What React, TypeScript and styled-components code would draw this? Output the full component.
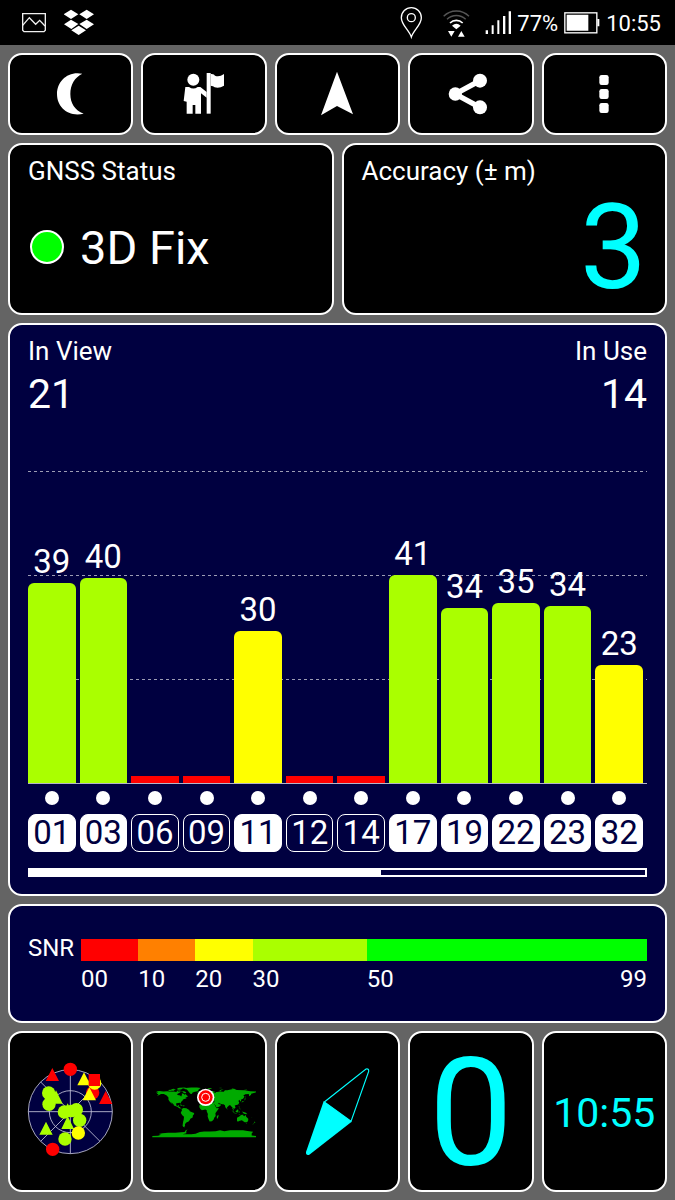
import React from "react";
import styled, { createGlobalStyle } from "styled-components";

const color = {
  frame: "#646464",
  line: "#ffffff",
  black: "#000000",
  navy: "#000040",
  cyan: "#00ffff",
  red: "#ff0000",
  orange: "#ff8000",
  yellow: "#ffff00",
  lime: "#aaff00",
  green: "#00ff00",
  land: "#00aa00",
};

const GlobalStyle = createGlobalStyle`
  *, *::before, *::after { box-sizing: border-box; }
  body {
    margin: 0;
    background: ${color.frame};
    color: ${color.line};
    font-family: Roboto, "Liberation Sans", sans-serif;
  }
`;

const Screen = styled.div`
  min-height: 100vh;
  display: flex;
  flex-direction: column;
`;

const StatusBar = styled.header`
  height: 45px;
  padding: 0 14px 0 22px;
  background: ${color.black};
  display: flex;
  justify-content: space-between;
`;

const StatusGroup = styled.div<{ $gap: number }>`
  display: flex;
  align-items: center;
  gap: ${(p) => p.$gap}px;
`;

const StatusText = styled.span`
  padding-top: 2px;
  font-size: 22px;
  line-height: 26px;
`;

const StatusIcon = styled.svg`
  display: block;
  height: 45px;
`;

const Main = styled.main`
  flex: 1;
  display: flex;
  flex-direction: column;
  gap: 8px;
  padding: 8px;
`;

const Row = styled.div<{ $columns: number }>`
  display: grid;
  grid-template-columns: repeat(${(p) => p.$columns}, minmax(0, 1fr));
  gap: 8px;
`;

const Tile = styled.button<{ $height: number }>`
  height: ${(p) => p.$height}px;
  padding: 0;
  border: 2px solid ${color.line};
  border-radius: 14px;
  background: ${color.black};
  color: ${color.cyan};
  font-family: inherit;
  display: flex;
  align-items: center;
  justify-content: center;
`;

const ToolIcon = styled.svg`
  width: 48px;
  height: 48px;
  fill: ${color.line};
`;

const TileDrawing = styled.svg`
  width: 121px;
  height: 157px;
  flex: none;
`;

const TileValue = styled.span<{ $size: number }>`
  padding-top: 4px;
  font-size: ${(p) => p.$size}px;
  line-height: 1;
`;

const Card = styled.section<{ $navy?: boolean }>`
  border: 2px solid ${color.line};
  border-radius: 14px;
  background: ${(p) => (p.$navy ? color.navy : color.black)};
  padding: 10px 18px 6px;
`;

const Title = styled.h2`
  margin: 0;
  font-size: 26px;
  font-weight: 400;
  line-height: 32px;
`;

const FixRow = styled.div`
  height: 120px;
  display: flex;
  align-items: center;
  gap: 16px;
  padding-left: 2px;
  font-size: 47px;
`;

const FixLamp = styled.span`
  width: 34px;
  height: 34px;
  border: 2px solid ${color.line};
  border-radius: 50%;
  background: ${color.green};
`;

const Accuracy = styled.div`
  height: 120px;
  color: ${color.cyan};
  font-size: 119px;
  line-height: 122px;
  text-align: right;
`;

const ChartCard = styled(Card)`
  flex: 1;
  padding-bottom: 17px;
  display: flex;
  flex-direction: column;
`;

const Counts = styled.div`
  display: flex;
  justify-content: space-between;
  margin-bottom: 50px;
`;

const Count = styled.div<{ $right?: boolean }>`
  text-align: ${(p) => (p.$right ? "right" : "left")};
`;

const CountValue = styled.div`
  font-size: 41px;
  line-height: 54px;
`;

const Plot = styled.div`
  display: grid;
  height: 313px;
  margin-top: auto;
  border-bottom: 1px solid #b4b4c8;
  > * {
    grid-area: 1 / 1;
  }
`;

const GridLines = styled.div`
  display: flex;
  flex-direction: column;
`;

const GridBand = styled.div`
  flex: 1;
  background: repeating-linear-gradient(90deg, #9c9cb4 0 3px, transparent 3px 6px) top left / 100% 1px no-repeat;
`;

const Columns = styled.div`
  display: grid;
  grid-template-columns: repeat(12, minmax(0, 1fr));
  column-gap: 4px;
  padding-right: 4px;
`;

const BarColumn = styled.div`
  height: 312px;
  display: flex;
  flex-direction: column;
  justify-content: flex-end;
  align-items: stretch;
`;

const BarLabel = styled.span`
  margin-bottom: 5px;
  font-size: 33px;
  line-height: 32px;
  text-align: center;
`;

const Bar = styled.div<{ $fill: string; $rounded: boolean }>`
  background: ${(p) => p.$fill};
  border-radius: ${(p) => (p.$rounded ? "6px 6px 0 0" : "0")};
`;

const Satellite = styled.div`
  padding-top: 7px;
  display: flex;
  flex-direction: column;
  align-items: center;
  gap: 9px;
`;

const Dot = styled.span`
  width: 14px;
  height: 14px;
  border-radius: 50%;
  background: ${color.line};
`;

const Badge = styled.span<{ $used: boolean }>`
  width: 100%;
  border: 1px solid ${color.line};
  border-radius: 8px;
  background: ${(p) => (p.$used ? color.line : "transparent")};
  color: ${(p) => (p.$used ? color.navy : color.line)};
  font-size: 33px;
  line-height: 36px;
  text-align: center;
`;

const ScrollTrack = styled.div`
  height: 9px;
  margin-top: 16px;
  border: 2px solid ${color.line};
`;

const ScrollThumb = styled.div`
  width: 57%;
  height: 100%;
  background: ${color.line};
`;

const SnrCard = styled(Card)`
  padding: 33px 18px 28px;
  display: grid;
  grid-template-columns: 53px 1fr;
  row-gap: 5px;
  font-size: 24px;
`;

const SnrLabel = styled.span`
  line-height: 18px;
`;

const SnrScale = styled.div<{ $labels?: boolean }>`
  grid-column: 2;
  height: ${(p) => (p.$labels ? 27 : 22)}px;
  line-height: 27px;
  display: flex;
`;

const SnrPart = styled.div<{ $span: number; $fill?: string }>`
  flex: ${(p) => p.$span} 1 0;
  min-width: 0;
  background: ${(p) => p.$fill ?? "transparent"};
  display: flex;
  justify-content: space-between;
`;

const satellites = [
  { prn: "01", snr: 39, level: 200, used: true },
  { prn: "03", snr: 40, level: 205, used: true },
  { prn: "06", snr: 0, level: 7, used: false },
  { prn: "09", snr: 0, level: 7, used: false },
  { prn: "11", snr: 30, level: 152, used: true },
  { prn: "12", snr: 0, level: 7, used: false },
  { prn: "14", snr: 0, level: 7, used: false },
  { prn: "17", snr: 41, level: 208, used: true },
  { prn: "19", snr: 34, level: 175, used: true },
  { prn: "22", snr: 35, level: 180, used: true },
  { prn: "23", snr: 34, level: 177, used: true },
  { prn: "32", snr: 23, level: 118, used: true },
];

const snrParts = [
  { from: "00", span: 10, fill: color.red },
  { from: "10", span: 10, fill: color.orange },
  { from: "20", span: 10, fill: color.yellow },
  { from: "30", span: 20, fill: color.lime },
  { from: "50", to: "99", span: 49, fill: color.green },
];

const snrColor = (snr: number) =>
  snr > 30 ? color.lime : snr > 10 ? color.yellow : color.red;

const ImageIcon = () => (
  <StatusIcon width="24" viewBox="66 0 72 135" fill="none" stroke="#f0f0f0" strokeWidth="4">
    <path d="M68 41H136V91l-4 4H72l-4-4Z" />
    <path d="M68 76 88 53l19 20 12-12 16 17" />
  </StatusIcon>
);

const DropboxIcon = () => (
  <StatusIcon width="30" viewBox="192 0 90 135" fill="#fff">
    <path d="M213 29l22 14-22 14-22-14ZM260 29l22 14-22 14-22-14ZM213 59l22 13-21 15-22-14ZM260 59l22 14-22 14-22-15ZM236 77l22 14-22 14-22-14Z" />
  </StatusIcon>
);

const PinIcon = () => (
  <StatusIcon width="32" viewBox="192 0 96 135" fill="none" stroke="#fff" strokeWidth="4">
    <path d="M229 111C222 89 199 75 199 53a30 30 0 0 1 60 0c0 22-23 36-30 58Z" />
    <circle cx="229" cy="53" r="12" />
  </StatusIcon>
);

const WifiIcon = () => (
  <StatusIcon width="36" viewBox="306 0 108 135" fill="none" strokeWidth="4">
    <path d="M326 49a53 53 0 0 1 76 0M336 58a40 40 0 0 1 56 0" stroke="#555" />
    <path d="M345 69a27 27 0 0 1 38 0" stroke="#fff" strokeWidth="5" />
    <path d="M351 77q13-12 26 0l-13 11ZM339 93h20l-10 17ZM369 110h20l-10-17Z" fill="#fff" />
  </StatusIcon>
);

const SignalIcon = () => (
  <StatusIcon width="32" viewBox="432 0 96 135" fill="#fff">
    <path d="M452 91h7v11h-7ZM470 76h6v26h-6ZM487 61h6v41h-6ZM504 48h7v54h-7ZM521 34h7v68h-7Z" />
  </StatusIcon>
);

const BatteryIcon = () => (
  <StatusIcon width="36" viewBox="687 0 108 135">
    <rect x="689.5" y="38.5" width="96" height="60" fill="none" stroke="#fff" strokeWidth="4" />
    <path d="M695 44h65v48h-65ZM787 57h6v22h-6Z" fill="#fff" />
  </StatusIcon>
);

const MoonIcon = () => (
  <ToolIcon viewBox="140 210 144 144">
    <path d="M246 221C202 212 170 244 170 282c0 40 34 70 80 59-27-10-40-32-40-59 0-28 13-50 36-61Z" />
  </ToolIcon>
);

const GuideIcon = () => (
  <ToolIcon viewBox="540 210 144 144">
    <circle cx="580" cy="239" r="18" />
    <path d="M556 261h11q13 9 26 0h8l19 15v17l-17-13v61h-17v-26h-8v26h-18v-36l-9-2Z" />
    <path d="M620 219h12v122h-12Z" />
    <path d="M632 222q11-1 13 5 12 6 27-5v35q-14 9-28 5-4-5-12-5Z" />
  </ToolIcon>
);

const NavigateIcon = () => (
  <ToolIcon viewBox="-64 210 144 144">
    <path d="M8 215 56 343 8 318-40 346Z" />
  </ToolIcon>
);

const ShareIcon = () => (
  <ToolIcon viewBox="336 210 144 144">
    <path d="M435 242 361 282l74 40" fill="none" stroke="#fff" strokeWidth="16" />
    <circle cx="361" cy="282" r="20" />
    <circle cx="435" cy="242" r="21" />
    <circle cx="435" cy="322" r="21" />
  </ToolIcon>
);

const MenuIcon = () => (
  <ToolIcon viewBox="736 210 144 144">
    <rect x="794" y="225" width="28" height="30" rx="7" />
    <rect x="794" y="267" width="28" height="30" rx="7" />
    <rect x="794" y="309" width="28" height="30" rx="7" />
  </ToolIcon>
);

const SkyView = () => (
  <TileDrawing viewBox="30 24 363 471">
    <circle cx="211" cy="260" r="126" fill={color.navy} />
    <g fill="none" stroke="#c8c8dc" strokeWidth="2.5">
      <circle cx="211" cy="260" r="126" />
      <circle cx="211" cy="260" r="63" />
      <path d="M85 260h252M211 134v252M122 171l178 178M300 171 122 349" />
    </g>
    <g fill={color.lime}>
      <path d="M168 196l20 40h-40Z" />
      <circle cx="146" cy="204" r="20" />
      <circle cx="153" cy="219" r="19" />
      <circle cx="147" cy="238" r="20" />
      <path d="M203 235l20 40h-40Z" />
      <circle cx="193" cy="261" r="20" />
      <circle cx="214" cy="258" r="19" />
      <circle cx="229" cy="254" r="20" />
      <circle cx="239" cy="286" r="20" />
      <path d="M203 273l19 39h-38ZM138 290l20 39h-40Z" />
      <circle cx="195" cy="342" r="20" />
    </g>
    <g fill={color.red}>
      <circle cx="211" cy="133" r="20" />
      <circle cx="158" cy="373" r="20" />
      <circle cx="278" cy="203" r="20" />
      <path d="M157 129l20 39h-40ZM317 198l20 39h-40Z" />
    </g>
    <g fill={color.yellow}>
      <circle cx="235" cy="324" r="20" />
      <circle cx="284" cy="174" r="20" />
      <path d="M252 142l20 39h-40ZM268 187l20 39h-40Z" />
    </g>
    <path d="M266 147h34v36h-34Z" fill={color.red} />
  </TileDrawing>
);

/* Land outlines are given in degrees of longitude and latitude. */
const WorldMap = () => (
  <TileDrawing viewBox="11 24 363 471">
    <g transform="translate(191.5 259) scale(.864 -.864)" fill={color.land}>
      {/* North and Central America */}
      <path d="M-168 66L-162 70-156 71-141 69-128 70-115 68-108 67-95 68-94 72-90 69-82 69-82 67-87 64-94 60-92 57-83 55-80 51-79 54-77 57-78 62-73 62-68 58-64 60-61 56-56 52-60 50-66 50-60 46-66 44-70 43-74 40-76 36-81 32-80 26-82 28-84 30-90 29-97 28-97 22-94 18-90 21-87 21-89 16-83 15-83 10-77 8-80 7-86 11-94 16-105 20-106 24-113 31-114 30-109 23-115 29-120 34-124 40-124 48-130 55-140 60-150 60-158 56-164 54-158 59-165 61-160 65Z" />
      {/* Arctic islands */}
      <path d="M-125 72-122 75-115 73-105 73-102 69-117 70ZM-98 72-90 73-86 70-70 70-62 66-66 62-73 65-74 68-84 70-90 74-80 73ZM-119 76-105 78-98 75-110 74ZM-95 76-88 78-80 76-90 75ZM-95 80-85 82-70 83-62 82-75 79-80 76-88 77Z" />
      <path d="M-73 78-65 81-45 83-25 83-12 81-19 76-22 70-32 68-40 65-43 60-48 61-53 67-55 70-60 76Z" />
      <path d="M-24 66-15 66-14 64-22 63ZM10 79 22 81 28 80 18 77ZM50 81 60 82 60 80ZM52 71 58 75 68 77 60 73 57 70ZM95 79 104 79 98 81ZM137 74 150 76 145 73Z" />
      {/* Caribbean */}
      <path d="M-85 22-81 24-74 20-78 19ZM-74 20-68 20-69 18-74 18Z" />
      {/* South America */}
      <path d="M-78 8-72 12-62 11-52 5-50 0-42-3-35-6-35-10-39-14-40-21-48-26-50-30-54-35-58-37-62-39-65-42-67-46-66-50-69-52-66-55-72-54-75-50-74-42-73-36-71-28-70-19-76-14-81-6-80-2-77 4Z" />
      {/* Europe and Asia */}
      <path d="M-9 43-9 37-5 36 0 39 3 42 9 44 15 38 17 40 13 45 19 42 22 37 26 41 36 37 35 32 33 28 39 21 43 13 52 16 59 22 56 25 51 25 48 30 57 26 62 25 67 25 72 21 73 16 77 8 80 14 86 20 90 22 94 17 98 15 98 9 103 2 104 2 100 12 105 9 109 13 106 20 112 22 118 24 122 30 119 36 122 40 126 34 129 36 127 40 135 44 140 51 136 55 143 59 155 60 156 52 163 58 163 61 179 65 180 69 160 70 140 73 113 74 104 78 80 73 72 73 68 68 55 69 45 67 42 67 38 64 33 67 40 67 28 71 18 69 5 61 7 58 12 56 18 62 24 66 22 60 29 60 22 56 12 54 8 57 7 54 1 50-4 48 0 46-2 43Z" />
      <path d="M-5 50 1 51-2 55-4 58-6 56-3 54ZM-10 52-6 52-6 55-9 54ZM142 46 144 50 143 54ZM130 31 136 33 142 40 145 44 141 45 140 37 131 34ZM121 22 121 25 122 24ZM80 6 82 8 80 10Z" />
      {/* Africa and Madagascar */}
      <path d="M-6 36 10 37 11 33 20 31 25 32 34 31 37 21 43 11 51 12 49 7 42-2 39-7 40-16 35-22 33-28 27-34 19-35 15-27 12-17 13-9 9-1 9 4 4 6-8 4-13 8-17 15-16 22-10 30ZM44-25 44-17 49-12 50-16 47-25Z" />
      {/* South-east Asia and Oceania */}
      <path d="M95 5 104-2 106-6 102-4ZM105-7 114-8 114-9 106-8ZM109 1 114 4 117 7 119 4 116-4 110-2ZM120 1 125 1 121-1 123-5 120-5ZM120 18 122 18 122 13 126 8 125 6 121 14ZM131-1 137-2 145-5 150-10 143-9 138-8 134-4ZM118-9 126-9 124-11Z" />
      <path d="M114-22 114-34 118-35 124-33 131-31 137-35 141-38 147-38 150-37 153-31 153-26 146-19 143-11 140-17 136-15 136-12 131-12 127-14 122-18ZM145-41 148-41 147-44ZM173-35 178-38 175-41ZM173-41 172-44 167-46ZM164-20 167-22 165-20Z" />
      {/* Antarctica */}
      <path d="M-180-90V-86L-160-85-150-81-158-79-145-76-125-74-100-74-80-73-68-72-64-66-58-63-62-68-62-76-75-80-45-80-30-78-15-72 0-70 20-70 40-69 55-66 70-69 90-66 110-66 135-66 150-68 170-71 165-77 165-84 180-86V-90Z" />
    </g>
    <circle cx="196" cy="217" r="26" fill="#fff" />
    <circle cx="196" cy="217" r="21" fill={color.red} />
    <circle cx="196" cy="217" r="12" fill={color.red} stroke="#fff" strokeWidth="3" />
  </TileDrawing>
);

const CompassNeedle = () => (
  <TileDrawing viewBox="21 24 363 471">
    <path d="M163 231 288 132Q297 130 296 139L243 289Z" fill="none" stroke={color.cyan} strokeWidth="3.5" />
    <path d="M161 229l84 61L118 389Q107 392 108 381Z" fill={color.cyan} />
  </TileDrawing>
);

const tools = [
  { name: "Night mode", Icon: MoonIcon },
  { name: "Guide", Icon: GuideIcon },
  { name: "Navigate", Icon: NavigateIcon },
  { name: "Share", Icon: ShareIcon },
  { name: "Menu", Icon: MenuIcon },
];

export default function App() {
  return (
    <Screen>
      <GlobalStyle />
      <StatusBar>
        <StatusGroup $gap={18}>
          <ImageIcon />
          <DropboxIcon />
        </StatusGroup>
        <StatusGroup $gap={6}>
          <PinIcon />
          <WifiIcon />
          <SignalIcon />
          <StatusText>77%</StatusText>
          <BatteryIcon />
          <StatusText>10:55</StatusText>
        </StatusGroup>
      </StatusBar>
      <Main>
        <Row as="nav" $columns={5}>
          {tools.map(({ name, Icon }) => (
            <Tile key={name} $height={82} aria-label={name}>
              <Icon />
            </Tile>
          ))}
        </Row>

        <Row $columns={2}>
          <Card>
            <Title>GNSS Status</Title>
            <FixRow>
              <FixLamp />
              <span>3D Fix</span>
            </FixRow>
          </Card>
          <Card>
            <Title>Accuracy (± m)</Title>
            <Accuracy>3</Accuracy>
          </Card>
        </Row>

        <ChartCard $navy>
          <Counts>
            <Count>
              <Title>In View</Title>
              <CountValue>21</CountValue>
            </Count>
            <Count $right>
              <Title>In Use</Title>
              <CountValue>14</CountValue>
            </Count>
          </Counts>
          <Plot>
            <GridLines>
              <GridBand />
              <GridBand />
              <GridBand />
            </GridLines>
            <Columns>
              {satellites.map((s) => (
                <BarColumn key={s.prn}>
                  {s.snr > 0 && <BarLabel>{s.snr}</BarLabel>}
                  <Bar $fill={snrColor(s.snr)} $rounded={s.snr > 0} style={{ height: s.level }} />
                </BarColumn>
              ))}
            </Columns>
          </Plot>
          <Columns>
            {satellites.map((s) => (
              <Satellite key={s.prn}>
                <Dot />
                <Badge $used={s.used}>{s.prn}</Badge>
              </Satellite>
            ))}
          </Columns>
          <ScrollTrack>
            <ScrollThumb />
          </ScrollTrack>
        </ChartCard>

        <SnrCard $navy>
          <SnrLabel>SNR</SnrLabel>
          <SnrScale>
            {snrParts.map((p) => (
              <SnrPart key={p.from} $span={p.span} $fill={p.fill} />
            ))}
          </SnrScale>
          <SnrScale $labels>
            {snrParts.map((p) => (
              <SnrPart key={p.from} $span={p.span}>
                <span>{p.from}</span>
                {p.to && <span>{p.to}</span>}
              </SnrPart>
            ))}
          </SnrScale>
        </SnrCard>

        <Row $columns={5}>
          <Tile $height={161} aria-label="Sky view">
            <SkyView />
          </Tile>
          <Tile $height={161} aria-label="World map">
            <WorldMap />
          </Tile>
          <Tile $height={161} aria-label="Compass">
            <CompassNeedle />
          </Tile>
          <Tile $height={161}>
            <TileValue $size={150}>0</TileValue>
          </Tile>
          <Tile $height={161}>
            <TileValue $size={41}>10:55</TileValue>
          </Tile>
        </Row>
      </Main>
    </Screen>
  );
}
